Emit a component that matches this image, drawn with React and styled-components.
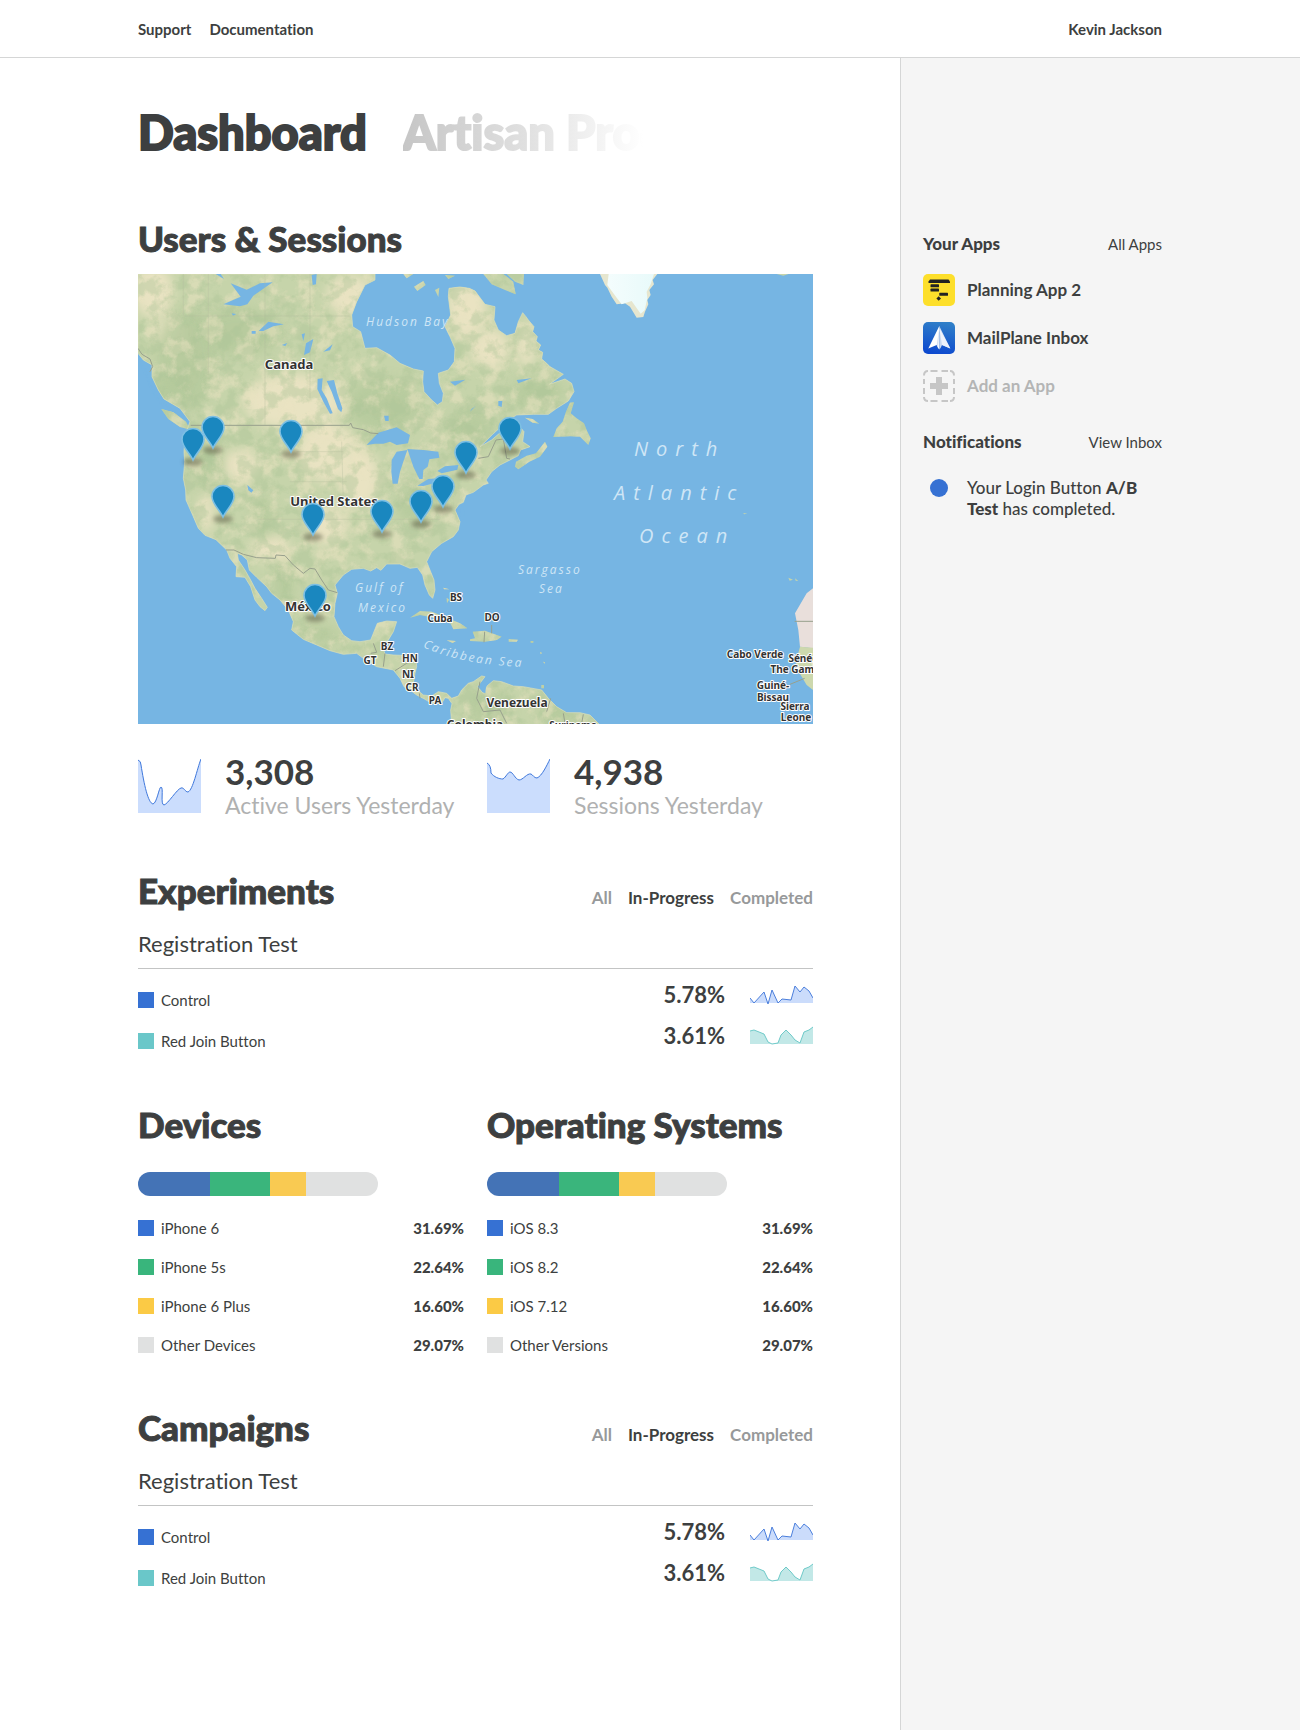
import React, { useState } from 'react';
import styled, { createGlobalStyle } from 'styled-components';

const GlobalStyle = createGlobalStyle`
  *, *::before, *::after { box-sizing: border-box; }
  body {
    margin: 0;
    background: #fff;
    color: #3d3f40;
    font-family: Lato, "Open Sans", sans-serif;
    font-size: 16px;
    line-height: 20px;
    font-variant-ligatures: none;
  }
  h1, h2, h3, p, ul, dl, dd { margin: 0; padding: 0; }
  ul { list-style: none; }
  a { color: inherit; text-decoration: none; }
`;

const Page = styled.div`
  --gutter: max(24px, calc(50vw - 512px));
  min-height: 100vh;
  display: flex;
  flex-direction: column;
`;

const TopBar = styled.header`
  display: flex;
  justify-content: space-between;
  align-items: center;
  height: 58px;
  padding: 0 var(--gutter);
  border-bottom: 1px solid #d5d6d6;
  font-weight: 700;
  font-size: 15px;
`;

const TopNav = styled.nav`
  display: flex;
  gap: 18px;
`;

const Body = styled.div`
  flex: 1;
  display: grid;
  grid-template-columns: minmax(0, 1fr) calc(262px + var(--gutter));
`;

const Main = styled.main`
  padding: 46px 87px 64px var(--gutter);
`;

const Sidebar = styled.aside`
  padding: 176px var(--gutter) 40px 22px;
  background: #f5f5f5;
  border-left: 1px solid #d5d6d6;
`;

const Products = styled.nav`
  display: flex;
  gap: 36px;
  margin-bottom: 58px;
  font-size: 47px;
  line-height: 56px;
  font-weight: 900;
  white-space: nowrap;
`;

const PageTitle = styled.h1`
  font: inherit;
  -webkit-text-stroke: 2px currentColor;
  paint-order: stroke;
`;

const NextProduct = styled.a`
  width: 245px;
  overflow: hidden;
  color: transparent;
  background: linear-gradient(90deg, #c6c6c6, #e0e0e0 50%, #fff 98%);
  background-clip: text;
  -webkit-background-clip: text;
  -webkit-text-stroke: 2px transparent;
`;

const Section = styled.section`
  margin-top: ${(p) => (p.$first ? 0 : 43)}px;
`;

const SectionHead = styled.div`
  display: flex;
  justify-content: space-between;
  align-items: baseline;
`;

const SectionTitle = styled.h2`
  font-size: 35px;
  line-height: 40px;
  font-weight: 900;
  -webkit-text-stroke: 1px currentColor;
  white-space: nowrap;
`;

const MapView = styled.svg`
  display: block;
  width: 100%;
  margin-top: 16px;
  background: #76b5e3;
`;

const PlaceLabel = styled.text`
  font-family: "Noto Sans", "Open Sans", sans-serif;
  font-size: ${(p) => p.$size || 10}px;
  font-weight: 700;
  fill: #333;
  stroke: #fff;
  stroke-width: 2px;
  stroke-linejoin: round;
  paint-order: stroke;
`;

const WaterLabel = styled.text`
  font-family: "Open Sans", "Noto Sans", sans-serif;
  font-size: ${(p) => (p.$ocean ? 20 : 12)}px;
  letter-spacing: ${(p) => (p.$ocean ? 8 : 2)}px;
  font-style: italic;
  fill: #cfe6f6;
`;

const Stats = styled.dl`
  display: grid;
  grid-template-columns: 1fr 1fr;
  gap: 23px;
  margin-top: 29px;
  padding-bottom: 7px;
`;

const Stat = styled.div`
  display: flex;
  gap: 24px;
`;

const StatChart = styled.svg`
  flex: none;
  width: 63px;
  height: 54px;
  margin-top: 6px;
`;

const StatText = styled.div`
  display: flex;
  flex-direction: column-reverse;
  justify-content: flex-end;
  white-space: nowrap;
`;

const StatValue = styled.dd`
  font-size: 35px;
  line-height: 37px;
  font-weight: 700;
`;

const StatLabel = styled.dt`
  font-size: 23px;
  line-height: 30px;
  color: #b0b1b1;
`;

const Filters = styled.div`
  display: flex;
  gap: 16px;
`;

const FilterButton = styled.button`
  padding: 0;
  border: 0;
  background: none;
  font: inherit;
  font-size: 17px;
  font-weight: 700;
  color: ${(p) => (p.$active ? '#3d3f40' : '#97999a')};
  cursor: pointer;
`;

const TestName = styled.h3`
  margin: 19px 0 10px;
  padding-bottom: 9px;
  border-bottom: 1px solid #c3c4c4;
  font-size: 22px;
  line-height: 30px;
  font-weight: 400;
`;

const DataTable = styled.table`
  width: 100%;
  border-collapse: collapse;
`;

const Row = styled.tr`
  height: ${(p) => p.$height}px;
`;

const NameCell = styled.th`
  padding: 0;
  font-weight: 400;
  font-size: 15px;
  text-align: left;
`;

const Name = styled.span`
  display: flex;
  align-items: center;
  gap: 7px;
`;

const Swatch = styled.i`
  width: 16px;
  height: 16px;
  background: ${(p) => p.$color};
`;

const RateCell = styled.td`
  padding: 0 0 9px;
  font-size: 22px;
  font-weight: 700;
`;

const Rate = styled.span`
  display: flex;
  justify-content: flex-end;
  align-items: center;
  gap: 25px;
`;

const Spark = styled.svg`
  width: 63px;
  height: 20px;
`;

const ShareCell = styled.td`
  padding: 0;
  font-size: 15px;
  font-weight: 900;
  text-align: right;
`;

const Columns = styled.div`
  display: grid;
  grid-template-columns: 1fr 1fr;
  gap: 23px;
`;

const Bar = styled.div`
  display: flex;
  width: 240px;
  max-width: 100%;
  height: 24px;
  margin: 28px 0 12px;
  border-radius: 12px;
  overflow: hidden;
`;

const Segment = styled.div`
  background: ${(p) => p.$color};
`;

const SideHead = styled.div`
  display: flex;
  justify-content: space-between;
  align-items: baseline;
`;

const SideTitle = styled.h2`
  font-size: 17px;
  line-height: 20px;
  font-weight: 900;
`;

const SideLink = styled.a`
  font-size: 15px;
`;

const AppList = styled.ul`
  display: flex;
  flex-direction: column;
  gap: 16px;
  margin: 20px 0 30px;
`;

const AppLink = styled.a`
  display: flex;
  align-items: center;
  gap: 12px;
  font-size: 17px;
  font-weight: 700;
  color: ${(p) => (p.$muted ? '#b4b5b5' : 'inherit')};
`;

const AppIcon = styled.svg`
  flex: none;
  width: 32px;
  height: 32px;
`;

const Notice = styled.li`
  display: grid;
  grid-template-columns: 32px 1fr;
  gap: 12px;
  margin-top: 25px;
  font-size: 17px;
  line-height: 21px;
  font-weight: 500;
  strong { font-weight: 900; }
`;

const Dot = styled.i`
  width: 18px;
  height: 18px;
  margin: 2px auto 0;
  border-radius: 50%;
  background: #3671d3;
`;

const MAINLAND = 'M24 27L24 265L40 285L66 300L66 335L85 375L102 402L150 430L180 470L172 492L165 520L162 560L164 590L160 640L167 675L168 705L190 755L205 790L225 811L258 824L290 855L300 880L320 905L318 935L345 937L362 965L375 1005L390 1025L405 1037L412 1027L395 1000L375 970L362 945L345 915L325 885L322 865L335 870L352 885L358 915L380 937L410 965L425 985L450 1005L475 1035L490 1070L485 1095L520 1123L560 1140L600 1157L640 1168L680 1165L700 1180L740 1205L790 1215L810 1240L822 1265L840 1275L860 1290L885 1303L905 1315L935 1315L945 1298L955 1300L966 1316L962 1335L965 1380L1410 1380L1380 1350L1350 1343L1310 1343L1280 1325L1255 1300L1235 1275L1180 1265L1150 1263L1115 1250L1090 1247L1072 1262L1060 1285L1042 1265L1065 1235L1055 1233L1030 1250L1015 1255L995 1275L985 1293L965 1300L950 1285L925 1280L905 1293L880 1290L862 1275L850 1255L855 1225L860 1205L858 1175L835 1172L790 1170L765 1167L758 1145L775 1125L790 1100L800 1070L770 1068L742 1075L730 1105L722 1125L690 1130L665 1127L640 1110L625 1085L612 1055L615 1015L622 985L615 960L640 930L665 913L700 910L722 918L740 908L753 916L770 897L810 897L840 910L862 907L878 930L885 960L898 990L908 1000L915 975L912 945L900 915L890 890L905 860L935 835L970 815L985 795L990 770L975 735L987 718L1000 712L1008 690L1030 682L1060 660L1075 655L1068 645L1085 620L1110 600L1140 585L1165 572L1172 555L1200 545L1178 530L1182 500L1165 480L1140 478L1085 525L1050 545L1088 508L1135 465L1160 450L1210 448L1255 448L1280 430L1315 408L1332 380L1325 355L1305 342L1258 358L1300 328L1260 305L1250 295L1235 282L1238 262L1225 255L1232 240L1218 228L1222 215L1208 200L1212 185L1195 165L1188 155L1178 143L1165 170L1155 205L1130 212L1105 195L1092 165L1095 125L1065 118L1035 78L1018 70L990 66L957 70L955 95L962 150L945 185L960 215L975 250L973 290L955 315L925 325L928 355L940 385L937 410L922 420L905 405L882 380L878 350L880 318L850 312L810 295L780 270L740 248L705 250L692 200L668 185L665 150L680 110L705 60L735 45L735 27Z';

const ISLANDS = [
  'M94 432L130 442L168 470L180 494L150 486L115 462Z',
  'M1320 413L1332 412L1322 445L1340 460L1362 475L1370 495L1382 520L1375 540L1350 515L1320 514L1270 516L1280 490L1298 470L1308 440Z',
  'M1158 590L1190 572L1218 565L1245 530L1252 545L1230 575L1198 590L1165 613L1155 605Z',
  'M1185 458L1208 462L1228 476L1208 473Z',
  'M1060 27L1120 27L1150 50L1157 88L1125 75L1085 58ZM1130 27L1182 27L1180 60L1155 50Z',
  'M852 65L880 48L887 60L862 78ZM915 75L928 68L925 96ZM820 27L850 27L830 40ZM945 30L975 32L955 42Z',
  'M840 1058L870 1038L905 1040L950 1058L990 1075L1012 1090L970 1093L962 1076L920 1060L870 1050Z',
  'M1020 1123L1035 1120L1028 1100L1065 1097L1115 1115L1100 1125L1065 1130L1020 1128Z',
  'M1136 1122L1164 1124L1160 1130L1136 1130ZM950 1126L978 1128L968 1134ZM1202 1128h8v5h-8ZM1230 1160l6 4l-4 4ZM1240 1190l5 2l-2 4ZM1234 1260h8v10h-8Z',
  'M940 968L958 973L942 973ZM950 998L957 1004L951 1014ZM1840 744L1852 746L1842 748ZM1975 938l14 6l-10 3ZM1995 940l10 8l-8 -1Z',
  'M1940 27L1976 27L1960 32Z',
];

const LAKES = [
  'M710 540L745 503L800 487L840 510L834 535L800 540L780 530L760 536L735 536Z',
  'M785 585L800 560L832 555L820 590L810 620L803 656L788 656L784 620Z',
  'M832 552L880 555L925 560L928 578L898 583L893 605L880 615L878 642L868 642L850 605Z',
  'M862 662L895 642L925 640L930 650L880 663ZM922 618L945 604L985 600L982 614L935 625Z',
  'M590 348L612 345L622 385L637 430L634 442L624 432L605 380ZM563 342L578 340L575 375L590 400L608 445L600 446L580 410L562 372Z',
  'M280 118L332 95L302 55L350 74L390 55L428 52L370 92L352 118L330 124Z',
  'M386 198L415 170L462 178L430 184L400 198ZM257 27L272 27L282 42ZM545 30L560 27L558 58L548 60ZM515 208L525 205L520 228ZM528 235L550 222L540 262L522 270ZM580 260L608 238L600 256ZM455 240L472 234L466 243ZM762 452L776 452L776 468L766 468Z',
  'M352 660L370 676L364 683L355 676ZM960 350L1006 344L975 362ZM1020 440L1038 422L1025 432ZM1055 1255L1068 1262L1066 1285L1056 1280ZM1145 315L1160 345L1205 340L1165 355Z',
  'M995 720l10 20l-8 30l-8 -20ZM305 145l14 2l-10 5ZM365 198h12v8h-12ZM1105 408l12 0l-2 18l-10 -4Z',
];

const DRY_AREAS = [
  [490, 410, 150, 85], [590, 560, 90, 90], [690, 640, 60, 90], [70, 80, 60, 80],
  [120, 200, 50, 50], [330, 600, 60, 45], [420, 850, 60, 40], [590, 780, 60, 60],
  [1010, 130, 60, 90], [1190, 240, 28, 70], [660, 90, 70, 60], [230, 745, 22, 60], [1080, 250, 60, 60],
];

const FOREST_AREAS = [
  [170, 280, 90, 150], [330, 200, 120, 70], [110, 400, 50, 70], [760, 420, 110, 80],
  [230, 600, 50, 60], [860, 720, 60, 60], [400, 760, 30, 60], [1220, 380, 80, 40],
  [1020, 500, 70, 60], [460, 960, 28, 80], [1080, 1330, 60, 50], [560, 1110, 70, 25], [1280, 1340, 50, 40],
];

const PLACES = [
  ['Canada', 151, 95, 13], ['United States', 196, 232, 13], ['México', 170, 337, 13],
  ['Cuba', 302, 348], ['BS', 318, 327], ['BZ', 249, 376], ['GT', 232, 390], ['HN', 272, 388],
  ['NI', 270, 404], ['CR', 274, 417], ['PA', 297, 430], ['DO', 354, 347],
  ['Venezuela', 379, 433, 12], ['Colombia', 337, 455, 12], ['Suriname', 435, 455],
  ['Cabo Verde', 617, 384], ['Sénégal', 670, 388], ['The Gambia', 662, 399],
  ['Guiné-', 635, 415], ['Bissau', 635, 427], ['Sierra', 657, 436], ['Leone', 658, 447],
];

const WATERS = [
  ['Hudson Bay', 228, 52], ['Gulf of', 217, 318], ['Mexico', 220, 338],
  ['Sargasso', 380, 300], ['Sea', 401, 319],
  ['North', 496, 182, true], ['Atlantic', 476, 226, true], ['Ocean', 501, 269, true],
];

const PINS = [
  [75, 175], [55, 187], [153, 179], [372, 176], [328, 200], [305, 234],
  [85, 244], [283, 249], [244, 259], [175, 262], [177, 343],
];

function SessionsMap() {
  return (
    <MapView viewBox="0 0 675 450" role="img" aria-label="Map of user sessions">
      <defs>
        <path id="caribbean" d="M285 373Q322 391 390 393" />
        <clipPath id="land">
          <path d={MAINLAND} />
          {ISLANDS.map((d) => <path key={d} d={d} />)}
        </clipPath>
        <filter id="soft" x="-50%" y="-50%" width="200%" height="200%">
          <feGaussianBlur stdDeviation="18" />
        </filter>
        <filter id="shade" x="-50%" y="-50%" width="200%" height="200%">
          <feGaussianBlur stdDeviation="2" />
        </filter>
        <filter id="sand" x="0" y="0" width="100%" height="100%" colorInterpolationFilters="sRGB">
          <feTurbulence type="fractalNoise" baseFrequency="0.018" numOctaves="5" seed="4" />
          <feColorMatrix values="0 0 0 0 0.92  0 0 0 0 0.89  0 0 0 0 0.76  5 0 0 0 -2.4" />
        </filter>
        <filter id="woods" x="0" y="0" width="100%" height="100%" colorInterpolationFilters="sRGB">
          <feTurbulence type="fractalNoise" baseFrequency="0.022" numOctaves="5" seed="11" />
          <feColorMatrix values="0 0 0 0 0.67  0 0 0 0 0.77  0 0 0 0 0.59  5 0 0 0 -2.3" />
        </filter>
        <linearGradient id="ice" x1="0" x2="1">
          <stop offset="0" stopColor="#f4fdfd" />
          <stop offset="1" stopColor="#e8fafa" />
        </linearGradient>
      </defs>
      <g transform="translate(-8 -9) scale(0.33333)">
        <g clipPath="url(#land)">
          <rect x="0" y="0" width="2060" height="1400" fill="#c6d4aa" />
          {DRY_AREAS.map(([x, y, rx, ry]) => (
            <ellipse key={`${x}-${y}`} cx={x} cy={y} rx={rx} ry={ry} fill="#e9e3c2" filter="url(#soft)" />
          ))}
          {FOREST_AREAS.map(([x, y, rx, ry]) => (
            <ellipse key={`${x}-${y}`} cx={x} cy={y} rx={rx} ry={ry} fill="#b4c99b" opacity="0.8" filter="url(#soft)" />
          ))}
          <rect x="0" y="0" width="1450" height="1400" filter="url(#sand)" opacity="0.5" />
          <rect x="0" y="0" width="1450" height="1400" filter="url(#woods)" opacity="0.4" />
        </g>
        <path d={MAINLAND} fill="none" stroke="#dcdfb8" strokeWidth="2" />
        <path d="M1410 27L1425 60L1432 68L1445 95L1460 118L1485 115L1500 125L1520 158L1540 156L1545 140L1555 118L1552 105L1562 90L1558 75L1572 58L1568 45L1582 27Z" fill="#e6e6cf" />
        <path d="M1436 27L1432 60L1460 98L1475 118L1505 108L1532 146L1544 136L1552 100L1550 80L1562 58L1572 27Z" fill="url(#ice)" />
        <path d="M2049 970L2030 985L1995 1045L2005 1095L2010 1145L2049 1150Z" fill="#e9dfdb" />
        <path d="M2010 1145L2049 1148L2049 1275L2030 1260L2000 1210L1998 1190Z" fill="#cdd8ad" />
        <g fill="#76b5e3">{LAKES.map((d) => <path key={d} d={d} />)}</g>
        <g fill="none" stroke="#76b5e3" strokeWidth="4" strokeDasharray="9 5">
          <path d="M30 290L45 330L62 370L85 400L120 430L160 458" />
          <path d="M46 310L58 355L80 385" />
          <path d="M55 350L68 385L100 425" />
        </g>
        <g fill="none" stroke="#98a08d" strokeWidth="3">
          <path d="M24 250L36 268L60 282L68 305L60 320" />
          <path d="M182 481L658 481L662 474L668 488L700 494L722 504L745 506" />
          <path d="M288 855L312 855L340 868L380 878L436 880L438 870L465 872L490 900L520 925L540 910L555 912L575 945L595 975L622 983" />
          <path d="M1045 580L1075 575L1098 525L1120 522L1130 580M1130 580L1140 582" />
          <path d="M722 1165L740 1162L730 1135M760 1205L765 1165M795 1217L830 1195L858 1178M870 1300L868 1285" />
          <path d="M1050 1250L1040 1300L1060 1340L1110 1335L1130 1375M1262 1300L1250 1340M1300 1345L1305 1375M1360 1348L1355 1375" />
          <path d="M1085 1105L1085 1080M1994 1069L2049 1069M1980 1258L2024 1240M1064 1100L1062 1132" />
        </g>
        <g fill="none" stroke="#b4bd9f" strokeWidth="1">
          <path d="M160 27V150M235 27V330M405 27V480M540 27V400M160 153H660M635 530L640 720M385 763H930M480 650H650M500 560H640" />
        </g>
      </g>
      {WATERS.map(([name, x, y, ocean]) => (
        <WaterLabel key={name} x={x} y={y} $ocean={ocean}>{name}</WaterLabel>
      ))}
      <WaterLabel><textPath href="#caribbean">Caribbean Sea</textPath></WaterLabel>
      {PLACES.map(([name, x, y, size]) => (
        <PlaceLabel key={name} x={x} y={y} $size={size} textAnchor="middle">{name}</PlaceLabel>
      ))}
      {PINS.map(([x, y]) => (
        <g key={`${x}-${y}`} transform={`translate(${x} ${y})`}>
          <ellipse cx="0" cy="1" rx="10" ry="4" fill="#4b4a35" opacity="0.45" filter="url(#shade)" />
          <path d="M0 -1C-3 -8 -11 -14 -11 -21.500A11 11 0 0 1 11 -21.500C11 -14 3 -8 0 -1Z" fill="#1a87bf" stroke="#7cbfe4" strokeWidth="1.600" />
        </g>
      ))}
    </MapView>
  );
}

const ACTIVE_LINE = 'M0 1Q3 2 3 6C6 25 10 44 15 45C19 44 21 28 23 28C26 28 22 46 26 46C30 45 39 30 43 29C46 28 47 33 50 33C55 31 59 10 63 0';
const SESSION_LINE = 'M0 4Q4 6 4 14C7 18 12 20 16 20C19 18 21 13 23 13C26 13 28 20 32 21C36 21 40 14 44 15C46 16 47 19 50 19C55 17 60 6 63 0';

function StatBlock({ label, value, line }) {
  return (
    <Stat>
      <StatChart viewBox="0 0 63 54" aria-hidden="true">
        <path d={`${line}V54H0Z`} fill="#cbddfd" />
        <path d={line} fill="none" stroke="#3f78dc" />
      </StatChart>
      <StatText>
        <StatLabel>{label}</StatLabel>
        <StatValue>{value}</StatValue>
      </StatText>
    </Stat>
  );
}

const VARIANTS = [
  { name: 'Control', rate: '5.78%', color: '#3671d3', fill: '#cbdcfb', stroke: '#4b7fdc',
    line: '0,13 4,18 14,7 18,19 22,5 28,18 32,14 41,15 45,1 50,7 54,2 59,6 63,13' },
  { name: 'Red Join Button', rate: '3.61%', color: '#6ac7c9', fill: '#c2e8e7', stroke: '#6fcac9',
    line: '0,5 4,4 9,6 14,8 18,16 22,18 28,17 31,9 36,4 41,9 45,14 50,17 54,6 59,4 63,1' },
];

function TestSection({ title }) {
  const [filter, setFilter] = useState('In-Progress');
  return (
    <Section>
      <SectionHead>
        <SectionTitle>{title}</SectionTitle>
        <Filters>
          {['All', 'In-Progress', 'Completed'].map((f) => (
            <FilterButton key={f} type="button" aria-pressed={f === filter} $active={f === filter} onClick={() => setFilter(f)}>
              {f}
            </FilterButton>
          ))}
        </Filters>
      </SectionHead>
      <TestName>Registration Test</TestName>
      <DataTable>
        <tbody>
          {VARIANTS.map((v) => (
            <Row key={v.name} $height={41}>
              <NameCell scope="row"><Name><Swatch $color={v.color} />{v.name}</Name></NameCell>
              <RateCell>
                <Rate>
                  {v.rate}
                  <Spark viewBox="0 0 63 20" aria-hidden="true">
                    <polygon points={`0,18 ${v.line} 63,18`} fill={v.fill} />
                    <polyline points={v.line} fill="none" stroke={v.stroke} />
                  </Spark>
                </Rate>
              </RateCell>
            </Row>
          ))}
        </tbody>
      </DataTable>
    </Section>
  );
}

const SHARES = [
  { share: '31.69%', bar: 30, color: '#3671d3', barColor: '#4473b6' },
  { share: '22.64%', bar: 25, color: '#39b57c', barColor: '#3ab57c' },
  { share: '16.60%', bar: 15, color: '#fbca45', barColor: '#f9ca52' },
  { share: '29.07%', bar: 30, color: '#e0e1e1', barColor: '#e0e1e1' },
];

function Breakdown({ title, names }) {
  return (
    <div>
      <SectionTitle>{title}</SectionTitle>
      <Bar aria-hidden="true">
        {SHARES.map((s) => <Segment key={s.share} $color={s.barColor} style={{ width: `${s.bar}%` }} />)}
      </Bar>
      <DataTable>
        <tbody>
          {SHARES.map((s, i) => (
            <Row key={s.share} $height={39}>
              <NameCell scope="row"><Name><Swatch $color={s.color} />{names[i]}</Name></NameCell>
              <ShareCell>{s.share}</ShareCell>
            </Row>
          ))}
        </tbody>
      </DataTable>
    </div>
  );
}

function PlanningIcon() {
  return (
    <AppIcon viewBox="0 0 32 32" aria-hidden="true">
      <rect width="32" height="32" rx="5" fill="#fddf2b" />
      <g fill="#222">
        <path d="M7 5.500H25.500L27 7.500V9H5.500V7.500Z" />
        <rect x="7.500" y="10.300" width="8.500" height="3" rx="0.600" />
        <rect x="7.500" y="14.600" width="8.500" height="3" rx="0.600" />
        <rect x="16.300" y="18.800" width="8.700" height="3" rx="0.600" />
        <path d="M15.700 22.200L18 24.500L15.700 26.800L13.400 24.500Z" />
      </g>
    </AppIcon>
  );
}

function MailPlaneIcon() {
  return (
    <AppIcon viewBox="0 0 32 32" aria-hidden="true">
      <defs>
        <linearGradient id="sky" x1="0.600" y1="0" x2="0.400" y2="1">
          <stop offset="0" stopColor="#2f7fc8" />
          <stop offset="1" stopColor="#0d49cf" />
        </linearGradient>
      </defs>
      <rect width="32" height="32" rx="5" fill="url(#sky)" />
      <path d="M16.300 4L5.300 26.500L13.700 23L15 26L16.300 27.500Z" fill="#fff" />
      <path d="M16.300 4L27.300 26.500L19 23L17.600 26L16.300 27.500Z" fill="#c9d9f0" />
      <path d="M16.300 6L13.700 23L15.200 25.500Z" fill="#d5e1f3" />
      <path d="M16.300 6L19 23L27.300 26.500Z" fill="#eef3fb" />
    </AppIcon>
  );
}

function AddIcon() {
  return (
    <AppIcon viewBox="0 0 32 32" aria-hidden="true">
      <path
        d="M1 5.500Q1 1 5 1M27 1Q31 1 31 5.500M31 27Q31 31 27 31M5 31Q1 31 1 27M7.500 1H14.500M18.500 1H25M7.500 31H14.500M18.500 31H25M1 9V14M1 18V24M31 9V14M31 18V24"
        fill="none" stroke="#c6c6c6" strokeWidth="2"
      />
      <path d="M13 7H19V13H25V19H19V25H13V19H7V13H13Z" fill="#c6c6c6" />
    </AppIcon>
  );
}

export default function App() {
  return (
    <>
      <GlobalStyle />
      <Page>
        <TopBar>
          <TopNav>
            <a href="#support">Support</a>
            <a href="#documentation">Documentation</a>
          </TopNav>
          <a href="#account">Kevin Jackson</a>
        </TopBar>
        <Body>
          <Main>
            <Products>
              <PageTitle>Dashboard</PageTitle>
              <NextProduct href="#products">Artisan Products</NextProduct>
            </Products>
            <Section $first>
              <SectionTitle>Users &amp; Sessions</SectionTitle>
              <SessionsMap />
              <Stats>
                <StatBlock label="Active Users Yesterday" value="3,308" line={ACTIVE_LINE} />
                <StatBlock label="Sessions Yesterday" value="4,938" line={SESSION_LINE} />
              </Stats>
            </Section>
            <TestSection title="Experiments" />
            <Section>
              <Columns>
                <Breakdown title="Devices" names={['iPhone 6', 'iPhone 5s', 'iPhone 6 Plus', 'Other Devices']} />
                <Breakdown title="Operating Systems" names={['iOS 8.3', 'iOS 8.2', 'iOS 7.12', 'Other Versions']} />
              </Columns>
            </Section>
            <TestSection title="Campaigns" />
          </Main>
          <Sidebar>
            <SideHead>
              <SideTitle>Your Apps</SideTitle>
              <SideLink href="#apps">All Apps</SideLink>
            </SideHead>
            <AppList>
              <li><AppLink href="#planning"><PlanningIcon />Planning App 2</AppLink></li>
              <li><AppLink href="#mailplane"><MailPlaneIcon />MailPlane Inbox</AppLink></li>
              <li><AppLink href="#add" $muted><AddIcon />Add an App</AppLink></li>
            </AppList>
            <SideHead>
              <SideTitle>Notifications</SideTitle>
              <SideLink href="#inbox">View Inbox</SideLink>
            </SideHead>
            <ul>
              <Notice>
                <Dot />
                <p>Your Login Button <strong>A/B Test</strong> has completed.</p>
              </Notice>
            </ul>
          </Sidebar>
        </Body>
      </Page>
    </>
  );
}
